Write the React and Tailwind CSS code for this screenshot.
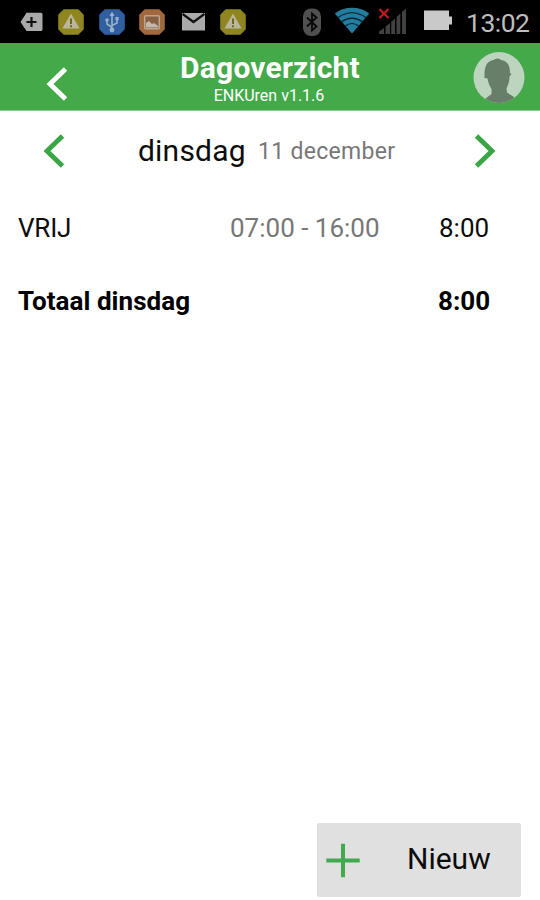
import React from 'react';

function WarningIcon({ className }) {
  return (
    <svg className={className} width="26" height="26" viewBox="0 0 26 26">
      <path d="M6 1H20L25 6V20L20 25H6L1 20V6Z" fill="#8f8620" stroke="#8f8620" strokeWidth="1.6" strokeLinejoin="round" />
      <path d="M13 4.5L21.6 19.5H4.4Z" fill="#b9b69c" />
      <path d="M13 9.5V15M13 16.3V18.3" stroke="#6f681c" strokeWidth="2" />
    </svg>
  );
}

function StatusBar() {
  return (
    <div className="flex h-[43px] items-start bg-black">
      <svg className="mt-[12px] ml-[20px] shrink-0" width="23" height="20" viewBox="0 0 23 20">
        <path d="M6.5 .8H21A1.5 1.5 0 0 1 22.5 2.3V17.5A1.5 1.5 0 0 1 21 19H6.5L.5 10Z" fill="#a9a9a9" />
        <path d="M11.5 5V15M6.500 10H16.5" stroke="#111" strokeWidth="2.2" />
      </svg>
      <WarningIcon className="mt-[9px] ml-[15px] shrink-0" />
      <svg className="mt-[9px] ml-[15px] shrink-0" width="26" height="26" viewBox="0 0 26 26">
        <path d="M6 1H20L25 6V20L20 25H6L1 20V6Z" fill="#2f5f9e" stroke="#2f5f9e" strokeWidth="1.6" strokeLinejoin="round" />
        <g fill="none" stroke="#9ab0cb" strokeWidth="1.6">
          <path d="M13 5V21M13 18.5L8 15V11M13 16.5L18 14V10" />
        </g>
        <path d="M13 2.8L15.6 7H10.4ZM16.4 8H19.6V11.2H16.4Z" fill="#9ab0cb" />
        <circle cx="8" cy="11" r="1.8" fill="#9ab0cb" />
        <circle cx="13" cy="21" r="2.4" fill="#9ab0cb" />
      </svg>
      <svg className="mt-[9px] ml-[14px] shrink-0" width="26" height="26" viewBox="0 0 26 26">
        <path d="M6 1H20L25 6V20L20 25H6L1 20V6Z" fill="#a0683c" stroke="#a0683c" strokeWidth="1.6" strokeLinejoin="round" />
        <rect x="5.7" y="6.7" width="14.6" height="13" rx="1" fill="#8b6040" stroke="#b9a796" strokeWidth="1.5" />
        <path d="M7 18.5V14L10 12L13 15L15 14L19 17V18.5Z" fill="#c4b8ac" />
      </svg>
      <svg className="mt-[13px] ml-[17px] shrink-0" width="23" height="18" viewBox="0 0 23 18">
        <path d="M0 0H23V17.5H0Z" fill="#aaa" />
        <path d="M.5 1L11.5 9L22.5 1" fill="none" stroke="#111" strokeWidth="2.3" />
      </svg>
      <WarningIcon className="mt-[9px] ml-[15px] shrink-0" />
      <svg className="mt-[8px] ml-[56px] shrink-0" width="20" height="29" viewBox="0 0 20 29">
        <rect x="1" y=".5" width="18" height="27.5" rx="8" fill="#505050" />
        <path d="M5 9.5L14.5 18.5L10 22.5V5.5L14.5 9.5L5 18.5" fill="none" stroke="#080808" strokeWidth="1.8" />
      </svg>
      <svg className="mt-[7px] ml-[12px] shrink-0" width="36" height="27" viewBox="0 0 36 27">
        <path d="M18 26.5L.8 6.5Q8 .8 18 .8T35.2 6.5Z" fill="#227d9f" />
        <g fill="none" stroke="#06202b" strokeWidth="1.2">
          <path d="M4 10.5Q18 1 32 10.5" />
          <path d="M7.5 14.8Q18 7.5 28.5 14.8" />
          <path d="M11.5 19Q18 14 24.5 19" />
        </g>
      </svg>
      <svg className="mt-[8px] ml-[9px] shrink-0" width="28" height="27" viewBox="0 0 28 27">
        <path d="M0 26V23.5L5 20V26ZM6.5 26V18.5L11 15V26ZM12.2 26V14L16 10.5V26ZM17.5 26V9L21.3 5.5V26ZM23 26V4L27 .5V26Z" fill="#414141" />
        <path d="M.5 1L9.5 10M9.5 1L.5 10" stroke="#c01820" strokeWidth="2.4" />
      </svg>
      <svg className="mt-[10px] ml-[17px] shrink-0" width="29" height="21" viewBox="0 0 29 21">
        <path d="M0 .5H25V6.5H28V14.5H25V20H0Z" fill="#c9c9c9" />
      </svg>
      <span className="mt-[9px] ml-[13px] text-[26.5px] leading-[27px] tracking-[-0.5px] whitespace-nowrap text-[#bdbdbd]">13:02</span>
    </div>
  );
}

function Chevron({ className, right }) {
  return (
    <svg className={className} width="22" height="34" viewBox="0 0 22 34">
      <path d={right ? 'M2.5 2L18 17L2.5 32' : 'M19.5 2L4 17L19.5 32'} fill="none" stroke="currentColor" strokeWidth="4.8" />
    </svg>
  );
}

function Header() {
  return (
    <header className="flex h-[68px] items-start border-b border-[#8ccb90] bg-[#43a949] text-white">
      <Chevron className="mt-[24px] ml-[46px] shrink-0" />
      <div className="ml-[67px] flex w-[270px] flex-col items-center">
        <h1 className="mt-[10px] text-[30px] leading-[30px] font-bold tracking-[0.2px] whitespace-nowrap">Dagoverzicht</h1>
        <p className="mt-[5px] mr-[2px] text-[16px] leading-[16px] whitespace-nowrap">ENKUren v1.1.6</p>
      </div>
      <svg className="mt-[8px] ml-[67px] shrink-0" width="54" height="54" viewBox="0 0 54 54">
        <defs>
          <clipPath id="avatar"><circle cx="27" cy="26.5" r="25.5" /></clipPath>
        </defs>
        <circle cx="27" cy="26.5" r="25.5" fill="#bdd5bf" />
        <path clipPath="url(#avatar)" d="M12.5 27C12 15 15 10 21.5 9C24 7 27 7 29 9C36 10 38 15 38 22L39.5 23L37.5 25.5C37.5 31 36 34 34.5 37.5L35 41.5L42 46L43 54H13V48L19.500 43V38C17 34 16 31 15.500 27.500Z" fill="#687e6b" />
      </svg>
    </header>
  );
}

export default function App() {
  return (
    <div className="flex h-[900px] w-[540px] flex-col overflow-hidden bg-white font-['Roboto',sans-serif] text-[#0c0c0c]">
      <StatusBar />
      <Header />
      <nav className="flex h-[92px] items-start">
        <Chevron className="mt-[23px] ml-[43px] shrink-0 text-[#39a544]" />
        <span className="mt-[25px] ml-[73px] w-[120px] text-[30px] leading-[30px] tracking-[0.2px] whitespace-nowrap">dinsdag</span>
        <span className="mt-[29px] w-[216px] text-[23px] leading-[23px] tracking-[0.3px] whitespace-nowrap text-[#777]">11 december</span>
        <Chevron right className="mt-[23px] shrink-0 text-[#39a544]" />
      </nav>
      <main className="flex flex-1 flex-col">
        <div className="flex h-[73px] items-start pt-[12px] pl-[18px] text-[26px] leading-[26px] whitespace-nowrap">
          <span className="w-[212px] tracking-[-0.2px]">VRIJ</span>
          <span className="w-[209px] text-[#777]">07:00 - 16:00</span>
          <span>8:00</span>
        </div>
        <div className="flex items-start pt-[12px] pl-[18px] text-[26px] leading-[26px] font-bold whitespace-nowrap text-black">
          <span className="w-[420px] tracking-[0.05px]">Totaal dinsdag</span>
          <span>8:00</span>
        </div>
      </main>
      <button className="mr-[19px] mb-[3px] flex h-[74px] w-[204px] items-start self-end rounded-[2px] bg-[#e0e0e0] text-left">
        <svg className="mt-[20px] ml-[9px] shrink-0" width="35" height="35" viewBox="0 0 35 35">
          <path d="M17 .8V34.2M.3 17.5H33.7" stroke="#43a94f" strokeWidth="4" />
        </svg>
        <span className="mt-[21px] ml-[46px] text-[30px] leading-[30px] whitespace-nowrap">Nieuw</span>
      </button>
    </div>
  );
}
